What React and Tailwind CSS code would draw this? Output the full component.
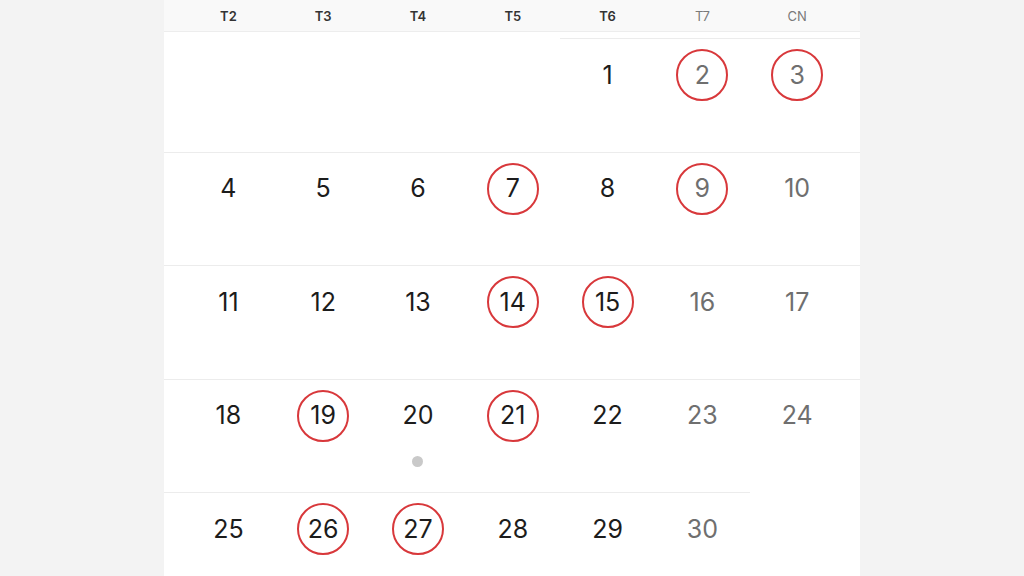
import React from "react";

const headers = [
  { label: "T2", weekend: false },
  { label: "T3", weekend: false },
  { label: "T4", weekend: false },
  { label: "T5", weekend: false },
  { label: "T6", weekend: false },
  { label: "T7", weekend: true },
  { label: "CN", weekend: true },
];

// null = empty cell before the 1st / after the 30th
const weeks = [
  [null, null, null, null, 1, 2, 3],
  [4, 5, 6, 7, 8, 9, 10],
  [11, 12, 13, 14, 15, 16, 17],
  [18, 19, 20, 21, 22, 23, 24],
  [25, 26, 27, 28, 29, 30, null],
];

const circled = [2, 3, 7, 9, 14, 15, 19, 21, 26, 27];
const dotted = [20];

const DayCell = ({ day, weekend }) => {
  if (day === null) return <div className="w-[94.8px]" />;
  const isCircled = circled.includes(day);
  return (
    <div className="w-[94.8px] border-t border-[#ececec] flex flex-col items-center pt-[10px]">
      <div
        className={`w-[52px] h-[52px] rounded-full flex items-center justify-center text-[25px] leading-none ${
          isCircled ? "border-2 border-[#d8383b]" : "border-2 border-transparent"
        } ${weekend ? "text-[#6f6f6f]" : "text-[#1c1c1c]"}`}
      >
        {day}
      </div>
      {dotted.includes(day) && (
        <div className="w-[11px] h-[11px] rounded-full bg-[#c9c9c9] mt-[14px]" />
      )}
    </div>
  );
};

const Week = ({ days }) => {
  const startsFull = days[0] !== null;
  const endsFull = days[6] !== null;
  return (
    <div className="flex h-[113.5px]">
      <div className={`w-[17px] ${startsFull ? "border-t border-[#ececec]" : ""}`} />
      {days.map((d, i) => (
        <DayCell key={i} day={d} weekend={i >= 5} />
      ))}
      <div className={`flex-1 ${endsFull ? "border-t border-[#ececec]" : ""}`} />
    </div>
  );
};

export default function App() {
  return (
    <div
      className="w-[1024px] h-[576px] overflow-hidden bg-[#f3f3f3] flex justify-center"
      style={{ fontFamily: "Inter, 'Noto Sans', sans-serif" }}
    >
      <div className="w-[696px] bg-white">
        <div className="h-[32px] bg-[#f9f9f9] border-b border-[#ededed] flex pl-[17px] pt-[3px]">
          {headers.map((h) => (
            <div
              key={h.label}
              className={`w-[94.8px] flex items-center justify-center text-[13px] ${
                h.weekend ? "text-[#7a7a7a] font-normal" : "text-[#333333] font-semibold"
              }`}
            >
              {h.label}
            </div>
          ))}
        </div>
        <div className="pt-[6px]">
          {weeks.map((w, i) => (
            <Week key={i} days={w} />
          ))}
        </div>
      </div>
    </div>
  );
}
